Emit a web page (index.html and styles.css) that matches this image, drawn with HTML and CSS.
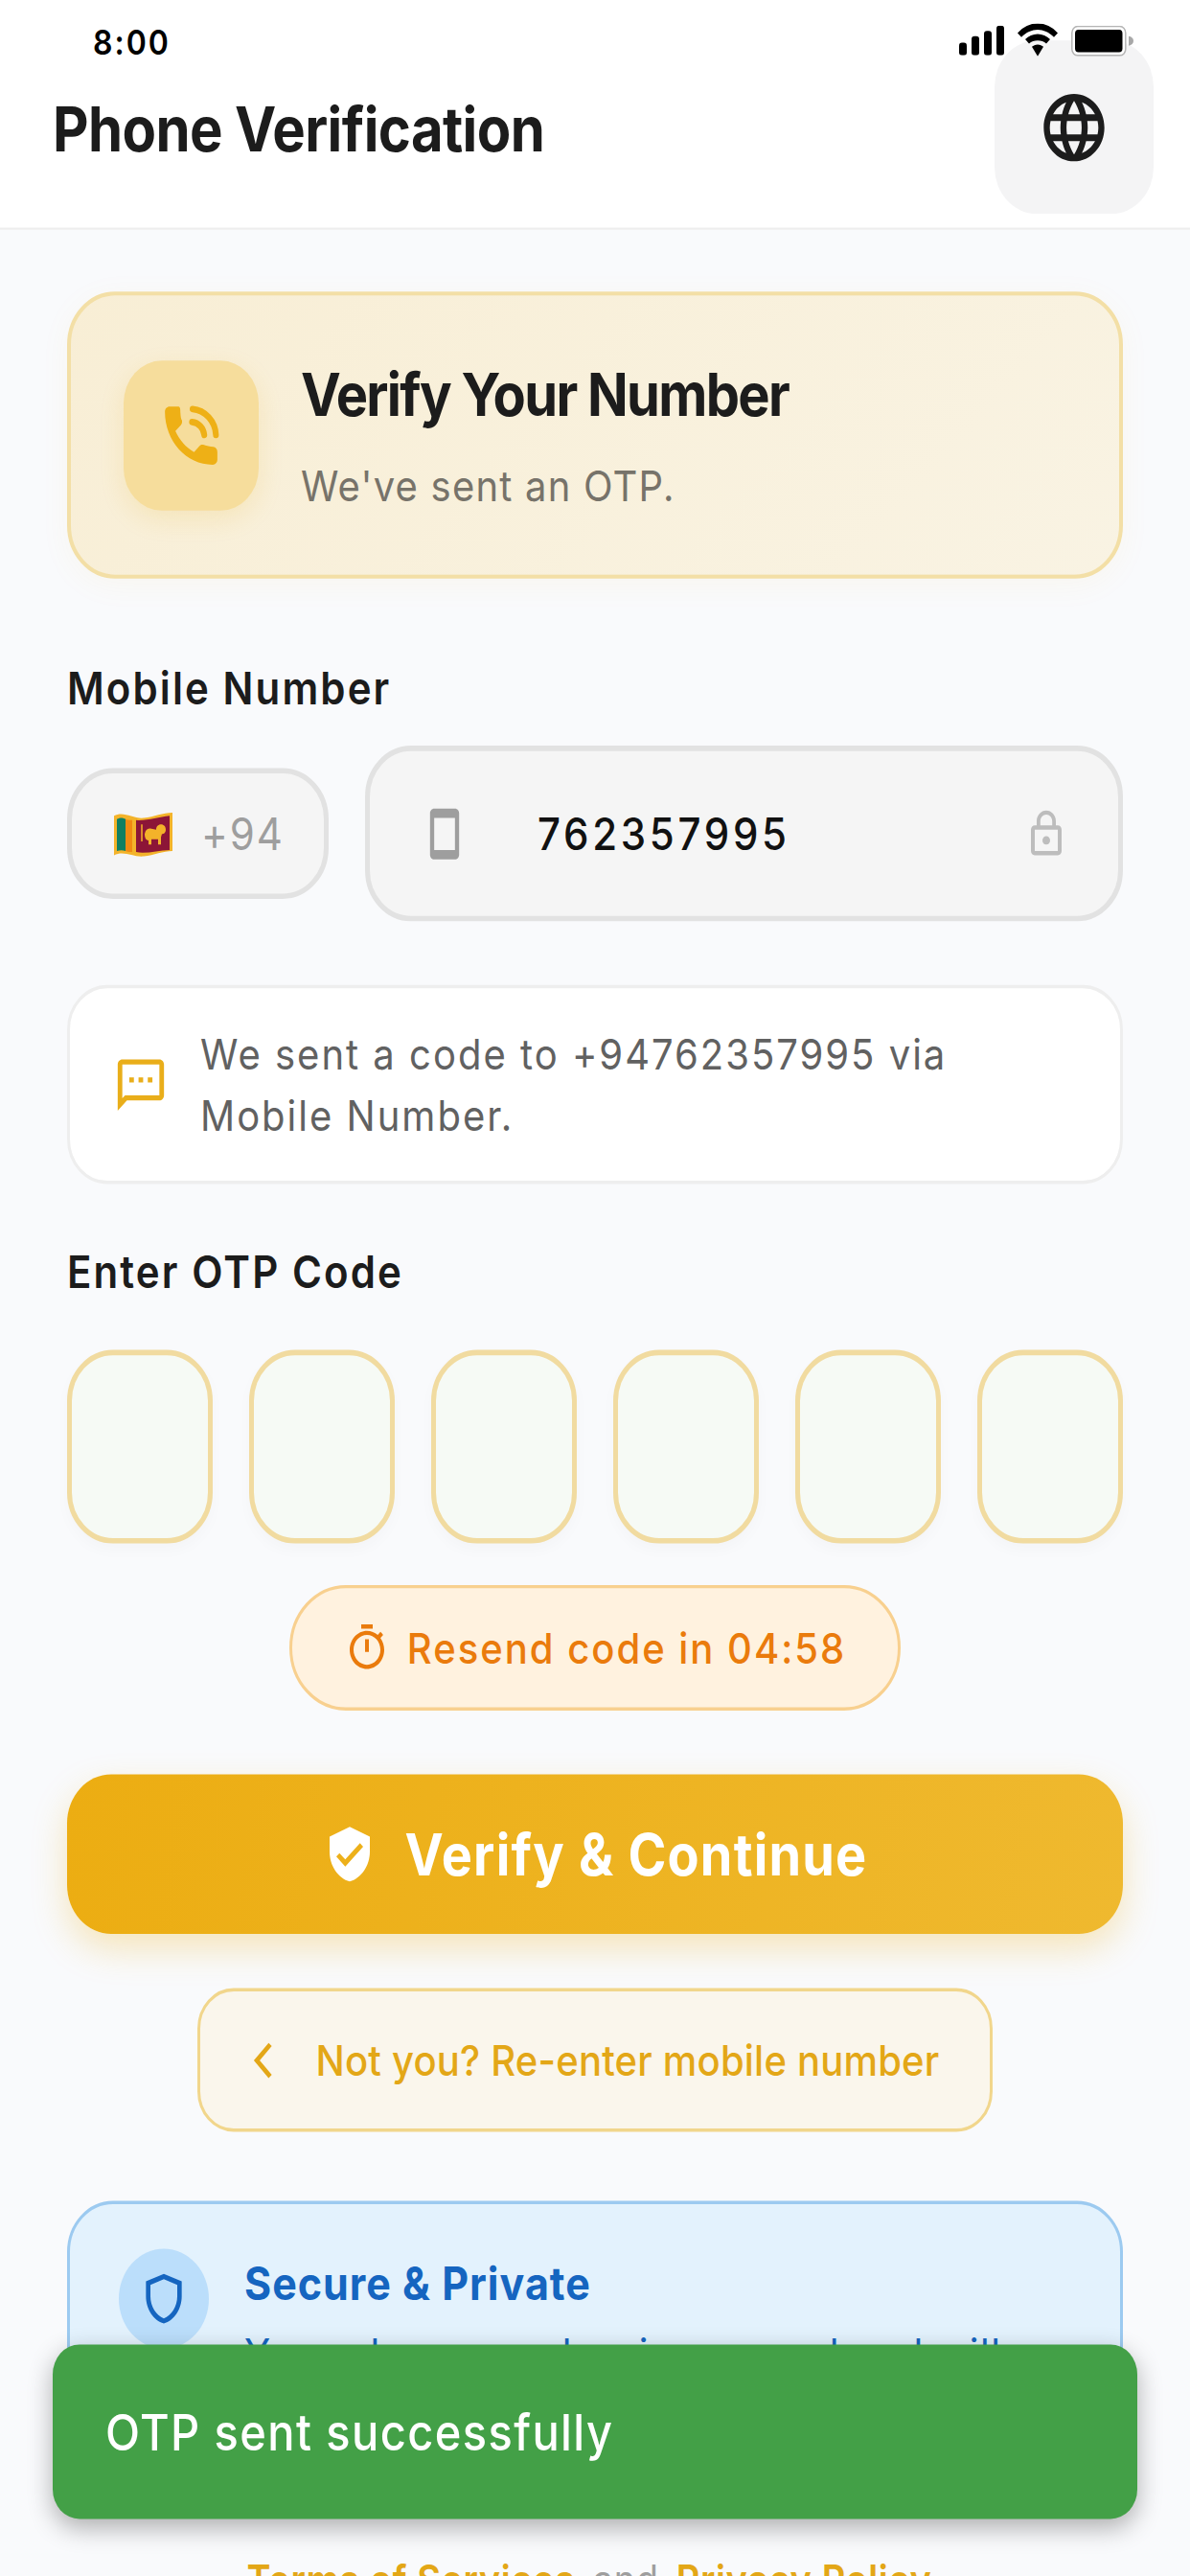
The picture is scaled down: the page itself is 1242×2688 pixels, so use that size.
FILE: index.html
```html
<!DOCTYPE html>
<html lang="en">
<head>
    <meta charset="UTF-8">
    <meta name="viewport" content="width=device-width, initial-scale=1.0">
    <title>Phone Verification</title>
    <link rel="stylesheet" href="styles.css">
</head>
<body>
    <div class="screen">
        <div class="status-bar">
            <span class="clock">8:00</span>
            <div class="status-icons">
                <svg class="signal" viewBox="0 0 47 28"><rect x="0" y="16" width="8" height="12" rx="3"/><rect x="13" y="10" width="8" height="18" rx="3"/><rect x="26" y="5" width="8" height="23" rx="3"/><rect x="39" y="0" width="8" height="28" rx="3"/></svg>
                <svg class="wifi" viewBox="0 0 42 31"><path d="M21 0C13 0 6 3 0 9l4 4c5-4.500 11-7 17-7s12 2.500 17 7l4-4C36 3 29 0 21 0z"/><path d="M21 10c-5 0-9.500 2-13 5l4 4c2.500-2 5.500-3 9-3s6.500 1 9 3l4-4c-3.500-3-8-5-13-5z"/><path d="M21 20c-2.500 0-4.500 1-6 2l6 9 6-9c-1.500-1-3.500-2-6-2z"/></svg>
                <svg class="battery" viewBox="0 0 65 29"><rect x="0.800" y="0.800" width="56" height="27.400" rx="6" fill="#fff" stroke="#b5b5b5" stroke-width="1.500"/><rect x="4" y="4" width="49.500" height="21" rx="3.500"/><path d="M60 10c3 .5 5 2 5 4.500s-2 4-5 4.500z" fill="#a8a8a8"/></svg>
            </div>
        </div>

        <header class="app-bar">
            <h1>Phone Verification</h1>
            <div class="lang-btn">
                <svg viewBox="0 0 24 24"><path d="M11.990 2C6.470 2 2 6.480 2 12s4.470 10 9.990 10C17.520 22 22 17.520 22 12S17.520 2 11.990 2zm6.930 6h-2.950c-.32-1.250-.78-2.450-1.380-3.560 1.840.63 3.370 1.910 4.330 3.560zM12 4.040c.83 1.200 1.480 2.530 1.910 3.960h-3.820c.43-1.430 1.080-2.760 1.910-3.960zM4.260 14C4.100 13.360 4 12.690 4 12s.1-1.360.26-2h3.380c-.08.66-.14 1.320-.14 2 0 .68.06 1.340.14 2H4.260zm.82 2h2.950c.32 1.250.78 2.450 1.380 3.560-1.840-.63-3.370-1.900-4.330-3.560zm2.950-8H5.080c.96-1.660 2.490-2.930 4.330-3.560C8.810 5.550 8.350 6.750 8.030 8zM12 19.960c-.83-1.200-1.480-2.530-1.910-3.960h3.820c-.43 1.430-1.080 2.760-1.910 3.960zM14.340 14H9.660c-.09-.66-.16-1.320-.16-2 0-.68.07-1.350.16-2h4.680c.09.65.16 1.320.16 2 0 .68-.07 1.340-.16 2zm.25 5.560c.6-1.110 1.060-2.310 1.380-3.560h2.950c-.96 1.650-2.490 2.930-4.330 3.560zM16.360 14c.08-.66.14-1.320.14-2 0-.68-.06-1.340-.14-2h3.380c.16.64.26 1.310.26 2s-.1 1.360-.26 2h-3.380z"/></svg>
            </div>
        </header>

        <main class="content">
            <section class="hero-card">
                <div class="hero-icon">
                    <svg viewBox="0 0 24 24"><path d="M7.500 3H4.600C3.700 3 3 3.700 3 4.600 3 13.700 10.300 21 19.400 21c.9 0 1.600-.7 1.600-1.600v-2.300c0-.9-.6-1.500-1.400-1.600-1.200-.1-2.200-.3-3.200-.6-.5-.2-1.100-.1-1.500.3l-1.900 1.900c-2.800-1.400-5-3.700-6.400-6.500l1.900-1.900c.4-.4.500-1 .3-1.500C8.500 7 8.400 6 8.300 4.800 8.300 3.800 8.300 3 7.500 3z"/><path class="arc" d="M12.500 3.800c4.300.3 7.800 3.800 8 8M12.300 7.800c2.300.2 4 1.900 4.200 4"/></svg>
                </div>
                <div class="hero-text">
                    <h2>Verify Your Number</h2>
                    <p>We've sent an OTP.</p>
                </div>
            </section>

            <label class="field-label mobile-label">Mobile Number</label>
            <div class="phone-row">
                <div class="prefix">
                    <svg class="flag" viewBox="0 0 61 44">
                        <path d="M0 5c10-5 20 3 31 2s20-5 30-5v36c-10 0-19 4-30 5S10 37 0 42z" fill="#f3b32a"/>
                        <path d="M3 8c4-2 7-1 9 0v30c-3-1-6-1-9 0z" fill="#0f7f62"/>
                        <path d="M12 8c3 1 5 1 7 1v30c-2 0-4 0-7-1z" fill="#f08a12"/>
                        <path d="M23 9c11 1 23-3 35-4v32c-12 0-24 4-35 2z" fill="#8c1537"/>
                        <path d="M29 13v16" stroke="#f3b32a" stroke-width="1.500"/>
                        <path d="M32 22c1-4 3-6 7-5l5 1c0-3 2-5 5-5 3 0 5 2 5 5s-2 4-4 4l-1 3v7h-3v-5h-7v5h-3v-4c-3 0-4-3-4-6z" fill="#f3b32a"/>
                    </svg>
                    <span>+94</span>
                </div>
                <div class="phone-input">
                    <svg class="device-icon" viewBox="0 0 24 24"><path d="M17 1.010L7 1c-1.100 0-2 .9-2 2v18c0 1.100.9 2 2 2h10c1.100 0 2-.9 2-2V3c0-1.100-.9-1.990-2-1.990zM17 19H7V5h10v14z"/></svg>
                    <span class="phone-value">762357995</span>
                    <svg class="lock-icon" viewBox="0 0 24 24"><path d="M12 17c1.100 0 2-.9 2-2s-.9-2-2-2-2 .9-2 2 .9 2 2 2zm6-9h-1V6c0-2.760-2.240-5-5-5S7 3.240 7 6v2H6c-1.100 0-2 .9-2 2v10c0 1.100.9 2 2 2h12c1.100 0 2-.9 2-2V10c0-1.100-.9-2-2-2zM8.900 6c0-1.710 1.390-3.100 3.100-3.100 1.710 0 3.100 1.390 3.100 3.100v2H8.900V6zM18 20H6V10h12v10z"/></svg>
                </div>
            </div>

            <div class="sent-note">
                <svg viewBox="0 0 24 24"><path d="M20 2H4c-1.100 0-1.990.9-1.990 2L2 22l4-4h14c1.100 0 2-.9 2-2V4c0-1.100-.9-2-2-2zm0 14H5.170L4 17.170V4h16v12zM7 9h2v2H7zm8 0h2v2h-2zm-4 0h2v2h-2z"/></svg>
                <p>We sent a code to +94762357995 via Mobile Number.</p>
            </div>

            <label class="field-label otp-label">Enter OTP Code</label>
            <div class="otp-row">
                <div class="otp-box"></div>
                <div class="otp-box"></div>
                <div class="otp-box"></div>
                <div class="otp-box"></div>
                <div class="otp-box"></div>
                <div class="otp-box"></div>
            </div>

            <div class="resend-wrap">
                <div class="resend">
                    <svg viewBox="0 0 24 24"><path d="M15 1H9v2h6V1zm-4 13h2V8h-2v6zm8.030-6.610l1.420-1.420c-.43-.51-.9-.99-1.410-1.410l-1.420 1.420C16.070 4.740 14.120 4 12 4c-4.970 0-9 4.030-9 9s4.020 9 9 9 9-4.030 9-9c0-2.120-.74-4.070-1.970-5.610zM12 20c-3.870 0-7-3.130-7-7s3.130-7 7-7 7 3.130 7 7-3.130 7-7 7z"/></svg>
                    <span>Resend code in 04:58</span>
                </div>
            </div>

            <button class="verify-btn">
                <svg viewBox="0 0 24 24"><path d="M12 1L3 5v6c0 5.550 3.840 10.740 9 12 5.160-1.260 9-6.450 9-12V5l-9-4zm-2 16l-4-4 1.410-1.410L10 14.170l6.590-6.590L18 9l-8 8z"/></svg>
                <span>Verify &amp; Continue</span>
            </button>

            <div class="back-wrap">
                <button class="back-btn">
                    <svg viewBox="0 0 24 36"><path d="M20 3L6 18l14 15"/></svg>
                    <span>Not you? Re-enter mobile number</span>
                </button>
            </div>

            <section class="secure-card">
                <div class="secure-icon">
                    <svg viewBox="0 0 24 24"><path d="M12 2 4 5v6.090c0 5.050 3.410 9.760 8 10.910 4.590-1.150 8-5.860 8-10.910V5l-8-3zm6 9.090c0 4-2.550 7.700-6 8.830-3.450-1.130-6-4.820-6-8.830v-4.700l6-2.250 6 2.250v4.700z"/></svg>
                </div>
                <div class="secure-text">
                    <h3>Secure &amp; Private</h3>
                    <p>Your phone number is secured and will only be used for verification.</p>
                </div>
            </section>

            <p class="terms"><a>Terms of Services</a> <span>and</span> <a>Privacy Policy</a></p>
        </main>

        <div class="toast">OTP sent successfully</div>
    </div>
</body>
</html>
```

FILE: styles.css
```css
/* the capture is stretched vertically, so the whole screen is drawn 1242 wide and scaled */
html, body {
    margin: 0;
    height: 2688px;
    overflow: hidden;
    background: #f9fafc;
}
* { box-sizing: border-box; }
.screen {
    position: relative;
    width: 1242px;
    height: 2422px;
    overflow: hidden;
    transform: scaleY(1.11);
    transform-origin: 0 0;
    font-family: Inter, "Noto Sans", sans-serif;
    color: #1c1c1c;
    background: #f9fafc;
}
svg { display: block; flex: none; }
h1, h2, h3, p { margin: 0; }

/* status bar */
.status-bar {
    position: absolute;
    z-index: 3;
    top: 0;
    left: 0;
    right: 0;
    display: flex;
    justify-content: space-between;
    padding: 22px 59px 0 97px;
}
.clock { font-size: 32px; font-weight: 600; line-height: 36px; letter-spacing: 2px; color: #000; }
.status-icons { display: flex; align-items: flex-start; gap: 14px; }
.signal { width: 47px; height: 28px; margin-top: 2px; }
.wifi { width: 42px; height: 31px; }
.battery { width: 65px; height: 29px; margin-top: 2px; }

/* app bar */
.app-bar {
    display: flex;
    justify-content: space-between;
    align-items: flex-start;
    height: 216px;
    padding: 38px 38px 0 55px;
    background: #fff;
    border-bottom: 2px solid #eeeeee;
}
.app-bar h1 {
    margin-top: 48px;
    font-size: 58px;
    font-weight: 700;
    line-height: 70px;
    letter-spacing: -0.6px;
}
.lang-btn {
    display: flex;
    align-items: center;
    justify-content: center;
    width: 166px;
    height: 163px;
    border-radius: 44px;
    background: #f4f4f5;
}
.lang-btn svg { width: 76px; height: 76px; fill: #1c1c1c; }

/* content */
.content { padding: 58px 70px 0; }

.hero-card {
    display: flex;
    align-items: center;
    height: 270px;
    padding: 0 55px;
    border: 4px solid #f3dfa6;
    border-radius: 50px;
    background: linear-gradient(135deg, #f8eed5, #f9f3e3);
    box-shadow: 0 6px 30px rgba(238, 176, 22, 0.05);
}
.hero-icon {
    display: flex;
    align-items: center;
    justify-content: center;
    width: 141px;
    height: 141px;
    margin-right: 44px;
    border-radius: 40px;
    background: #f6dd9c;
    box-shadow: 0 8px 24px rgba(238, 176, 22, 0.15);
}
.hero-icon svg { width: 73px; height: 73px; fill: #eeb016; }
.hero-icon .arc { fill: none; stroke: #eeb016; stroke-width: 2; stroke-linecap: round; }
.hero-text h2 {
    font-size: 56px;
    font-weight: 700;
    line-height: 68px;
    letter-spacing: -1.7px;
    color: #1c1c1c;
}
.hero-text p {
    margin-top: 27px;
    font-size: 40px;
    line-height: 50px;
    letter-spacing: 1.2px;
    color: #77736a;
}

.field-label {
    display: block;
    font-size: 42px;
    font-weight: 600;
    line-height: 52px;
    letter-spacing: 2.1px;
    color: #1c1c1c;
}
.mobile-label { margin-top: 77px; }
.otp-label { margin-top: 57px; }

.phone-row {
    display: flex;
    align-items: center;
    gap: 38px;
    margin-top: 28px;
}
.prefix {
    display: flex;
    align-items: center;
    gap: 30px;
    width: 273px;
    height: 123px;
    padding-left: 44px;
    border: 5px solid #e2e2e2;
    border-radius: 48px;
    background: #f5f5f5;
    font-size: 42px;
    letter-spacing: 2px;
    color: #9e9e9e;
}
.flag { width: 61px; height: 44px; }
.phone-input {
    flex: 1;
    display: flex;
    align-items: center;
    height: 165px;
    padding: 0 51px 0 52px;
    border: 5px solid #e2e2e2;
    border-radius: 48px;
    background: #f5f5f5;
}
.device-icon { width: 52px; height: 52px; fill: #9e9e9e; }
.phone-value {
    flex: 1;
    margin-left: 71px;
    font-size: 42px;
    font-weight: 500;
    letter-spacing: 3.7px;
    color: #111;
}
.lock-icon { width: 48px; height: 48px; fill: #bdbdbd; }

.sent-note {
    display: flex;
    align-items: center;
    gap: 33px;
    height: 187px;
    margin-top: 60px;
    padding: 0 60px 0 45px;
    border: 3px solid #eeeeee;
    border-radius: 42px;
    background: #fff;
}
.sent-note svg { width: 58px; height: 58px; fill: #e9ae1a; }
.sent-note p { font-size: 40px; line-height: 58px; letter-spacing: 2px; color: #616161; }

.otp-row {
    display: flex;
    justify-content: space-between;
    margin-top: 47px;
}
.otp-box {
    width: 152px;
    height: 182px;
    border: 5px solid #f1dba0;
    border-radius: 48px;
    background: #f6faf5;
    box-shadow: 0 6px 14px rgba(0, 0, 0, 0.025);
}

.resend-wrap, .back-wrap { display: flex; justify-content: center; }
.resend-wrap { margin-top: 39px; }
.resend {
    display: flex;
    align-items: center;
    justify-content: center;
    gap: 18px;
    width: 638px;
    height: 118px;
    border: 3px solid #f8d08f;
    border-radius: 59px;
    background: #fff2df;
    font-size: 40px;
    font-weight: 500;
    letter-spacing: 2px;
    color: #ea7b0c;
}
.resend svg { width: 48px; height: 48px; fill: #ea7b0c; }

button { font-family: inherit; border: none; padding: 0; }
.verify-btn {
    display: flex;
    align-items: center;
    justify-content: center;
    gap: 30px;
    width: 100%;
    height: 150px;
    margin-top: 60px;
    border-radius: 46px;
    background: linear-gradient(100deg, #ecad12, #efb92f);
    box-shadow: 0 14px 34px rgba(238, 176, 22, 0.28);
    font-size: 54px;
    font-weight: 700;
    letter-spacing: 1.2px;
    color: #fff;
}
.verify-btn svg { width: 56px; height: 56px; fill: #fff; }

.back-wrap { margin-top: 51px; }
.back-btn {
    display: flex;
    align-items: center;
    justify-content: center;
    gap: 44px;
    width: 830px;
    height: 135px;
    border: 3px solid #f1d68c;
    border-radius: 38px;
    background: #faf6ec;
    font-size: 40px;
    font-weight: 500;
    letter-spacing: 0.2px;
    color: #e3a717;
}
.back-btn svg { width: 24px; height: 36px; fill: none; stroke: #e3a717; stroke-width: 4.500; }

.secure-card {
    display: flex;
    align-items: flex-start;
    gap: 37px;
    margin-top: 65px;
    padding: 42px 50px 50px 51px;
    border: 3px solid #9ccaf0;
    border-radius: 48px;
    background: #e3f2fd;
}
.secure-icon {
    flex: none;
    display: flex;
    align-items: center;
    justify-content: center;
    width: 94px;
    height: 94px;
    border-radius: 50%;
    background: #bbdefb;
}
.secure-icon svg { width: 56px; height: 56px; fill: #1565c0; }
.secure-text h3 {
    margin-top: 6px;
    font-size: 43px;
    font-weight: 700;
    line-height: 52px;
    letter-spacing: 1px;
    color: #1565c0;
}
.secure-text p {
    margin-top: 14px;
    font-size: 40px;
    line-height: 54px;
    letter-spacing: 1.500px;
    color: #1565c0;
}

.terms {
    margin-top: 53px;
    padding-right: 12px;
    text-align: center;
    font-size: 38px;
    font-weight: 600;
    line-height: 50px;
    letter-spacing: 0.6px;
}
.terms a { color: #e3a717; }
.terms span { margin: 0 8px; font-weight: 400; color: #9e9e9e; }

.toast {
    position: absolute;
    z-index: 2;
    left: 55px;
    right: 55px;
    top: 2204px;
    display: flex;
    align-items: center;
    height: 164px;
    padding-left: 55px;
    border-radius: 28px;
    background: #43a047;
    box-shadow: 0 8px 24px rgba(0, 0, 0, 0.3);
    font-size: 47px;
    font-weight: 500;
    letter-spacing: 1.4px;
    color: #fff;
}
```
